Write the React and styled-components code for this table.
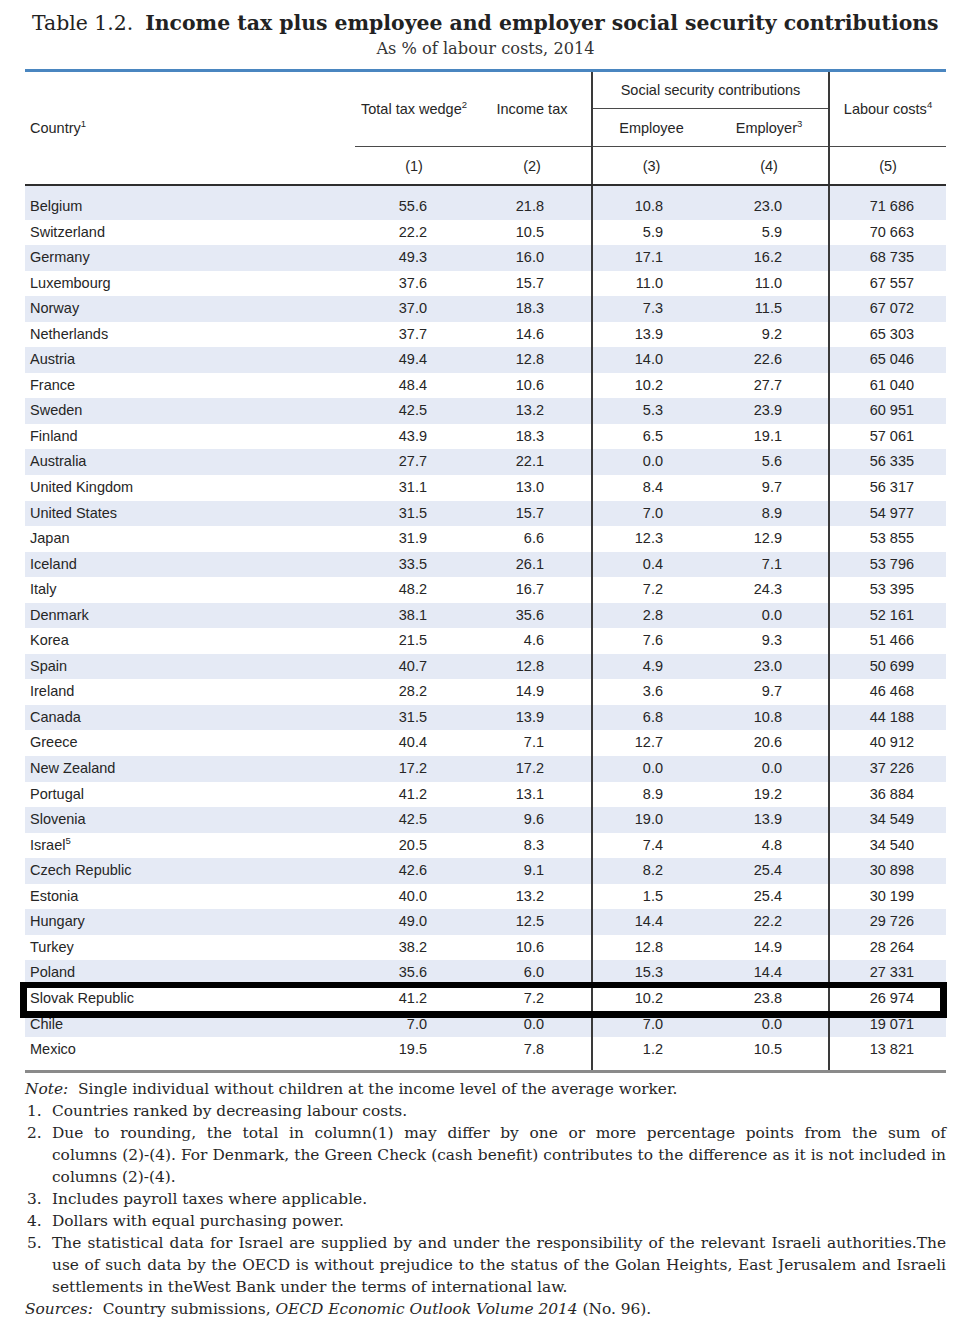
import styled, { createGlobalStyle } from 'styled-components';

const GlobalStyle = createGlobalStyle`
  body {
    margin: 0;
    background: #ffffff;
  }
`;

// OECD data, ranked by labour costs
const rows = [
  ['Belgium', '55.6', '21.8', '10.8', '23.0', '71 686'],
  ['Switzerland', '22.2', '10.5', '5.9', '5.9', '70 663'],
  ['Germany', '49.3', '16.0', '17.1', '16.2', '68 735'],
  ['Luxembourg', '37.6', '15.7', '11.0', '11.0', '67 557'],
  ['Norway', '37.0', '18.3', '7.3', '11.5', '67 072'],
  ['Netherlands', '37.7', '14.6', '13.9', '9.2', '65 303'],
  ['Austria', '49.4', '12.8', '14.0', '22.6', '65 046'],
  ['France', '48.4', '10.6', '10.2', '27.7', '61 040'],
  ['Sweden', '42.5', '13.2', '5.3', '23.9', '60 951'],
  ['Finland', '43.9', '18.3', '6.5', '19.1', '57 061'],
  ['Australia', '27.7', '22.1', '0.0', '5.6', '56 335'],
  ['United Kingdom', '31.1', '13.0', '8.4', '9.7', '56 317'],
  ['United States', '31.5', '15.7', '7.0', '8.9', '54 977'],
  ['Japan', '31.9', '6.6', '12.3', '12.9', '53 855'],
  ['Iceland', '33.5', '26.1', '0.4', '7.1', '53 796'],
  ['Italy', '48.2', '16.7', '7.2', '24.3', '53 395'],
  ['Denmark', '38.1', '35.6', '2.8', '0.0', '52 161'],
  ['Korea', '21.5', '4.6', '7.6', '9.3', '51 466'],
  ['Spain', '40.7', '12.8', '4.9', '23.0', '50 699'],
  ['Ireland', '28.2', '14.9', '3.6', '9.7', '46 468'],
  ['Canada', '31.5', '13.9', '6.8', '10.8', '44 188'],
  ['Greece', '40.4', '7.1', '12.7', '20.6', '40 912'],
  ['New Zealand', '17.2', '17.2', '0.0', '0.0', '37 226'],
  ['Portugal', '41.2', '13.1', '8.9', '19.2', '36 884'],
  ['Slovenia', '42.5', '9.6', '19.0', '13.9', '34 549'],
  ['Israel', '20.5', '8.3', '7.4', '4.8', '34 540', '5'],
  ['Czech Republic', '42.6', '9.1', '8.2', '25.4', '30 898'],
  ['Estonia', '40.0', '13.2', '1.5', '25.4', '30 199'],
  ['Hungary', '49.0', '12.5', '14.4', '22.2', '29 726'],
  ['Turkey', '38.2', '10.6', '12.8', '14.9', '28 264'],
  ['Poland', '35.6', '6.0', '15.3', '14.4', '27 331'],
  ['Slovak Republic', '41.2', '7.2', '10.2', '23.8', '26 974'],
  ['Chile', '7.0', '0.0', '7.0', '0.0', '19 071'],
  ['Mexico', '19.5', '7.8', '1.2', '10.5', '13 821'],
];

const HIGHLIGHT = 'Slovak Republic';

const Page = styled.div`
  width: 921px;
  padding: 8px 24px 12px 25px;
  color: #262626;
`;

const Title = styled.h1`
  margin: 0 0 0 7px;
  font-family: 'DejaVu Serif', 'Liberation Serif', serif;
  font-size: 20.4px;
  line-height: 30px;
  font-weight: 400;
  color: #222;
  white-space: nowrap;

  b {
    font-weight: 700;
    margin-left: 12px;
  }
`;

const Subtitle = styled.div`
  font-family: 'DejaVu Serif', 'Liberation Serif', serif;
  font-size: 16.2px;
  line-height: 22px;
  text-align: center;
  color: #333;
  margin: 0 0 9px 0;
`;

const Table = styled.table`
  width: 921px;
  border-collapse: collapse;
  table-layout: fixed;
  border-top: 3px solid #4a86c0;
  font-family: 'Liberation Sans', Arial, sans-serif;
  font-size: 14.5px;
  color: #262626;

  sup {
    font-size: 9.5px;
    line-height: 0;
    vertical-align: 6px;
  }
`;

const Th = styled.th`
  font-weight: 400;
  padding: 0;
  height: ${p => p.$h || 36}px;
  text-align: ${p => (p.$left ? 'left' : 'center')};
  padding-left: ${p => (p.$left ? '5px' : '0')};
  border-left: ${p => (p.$divider ? '2px solid #3a3a3a' : 'none')};
  border-bottom: ${p => p.$under || 'none'};
  vertical-align: middle;
  white-space: nowrap;
`;

const Row = styled.tr`
  background: ${p => (p.$shaded ? '#e5eaf5' : '#ffffff')};
  position: ${p => (p.$boxed ? 'relative' : 'static')};

  &::after {
    content: ${p => (p.$boxed ? "''" : 'none')};
    position: absolute;
    left: -5px;
    right: -1px;
    top: -4px;
    bottom: -6px;
    border: 7px solid #000;
    border-top-width: 6px;
    pointer-events: none;
  }

  &:first-child td {
    padding-top: 8px;
  }

  &:last-child td {
    padding-bottom: 7px;
    border-bottom: 3px solid #8a8a8a;
  }
`;

const Td = styled.td`
  padding: 0;
  height: 25.55px;
  line-height: 25.55px;
  text-align: ${p => (p.$left ? 'left' : 'right')};
  padding-left: ${p => (p.$left ? '5px' : '0')};
  padding-right: ${p => (p.$pr != null ? p.$pr : 0)}px;
  border-left: ${p => (p.$divider ? '2px solid #3a3a3a' : 'none')};
  white-space: nowrap;
`;

const Notes = styled.div`
  margin-top: 5px;
  font-family: 'DejaVu Serif', 'Liberation Serif', serif;
  font-size: 15.4px;
  line-height: 22px;
  color: #262626;
`;

const NoteLine = styled.div`
  i {
    font-style: italic;
  }
`;

const NoteItem = styled.div`
  display: grid;
  grid-template-columns: 25px 1fr;
  padding-left: 2px;
`;

const NoteText = styled.div`
  text-align: justify;
`;

const Keep = styled.span`
  white-space: nowrap;
`;

const padFor = [46, 47, 47, 46, 32];

const App = () => {
  const line = '1.5px solid #4a4a4a';
  const thick = '2.5px solid #2e2e2e';

  return (
    <Page>
      <GlobalStyle />
      <Title>
        Table 1.2.<b>Income tax plus employee and employer social security contributions</b>
      </Title>
      <Subtitle>As % of labour costs, 2014</Subtitle>

      <Table>
        <colgroup>
          <col style={{ width: 330 }} />
          <col style={{ width: 118 }} />
          <col style={{ width: 119 }} />
          <col style={{ width: 118 }} />
          <col style={{ width: 119 }} />
          <col style={{ width: 117 }} />
        </colgroup>
        <thead>
          <tr>
            <Th rowSpan={3} $left $under={thick}>
              Country<sup>1</sup>
            </Th>
            <Th rowSpan={2} $under={line}>
              Total tax wedge<sup>2</sup>
            </Th>
            <Th rowSpan={2} $under={line}>Income tax</Th>
            <Th colSpan={2} $divider $under={line} $h={36}>
              Social security contributions
            </Th>
            <Th rowSpan={2} $divider $under={line}>
              Labour costs<sup>4</sup>
            </Th>
          </tr>
          <tr>
            <Th $divider $under={line} $h={37}>Employee</Th>
            <Th $under={line} $h={37}>
              Employer<sup>3</sup>
            </Th>
          </tr>
          <tr>
            <Th $under={thick} $h={37}>(1)</Th>
            <Th $under={thick} $h={37}>(2)</Th>
            <Th $divider $under={thick} $h={37}>(3)</Th>
            <Th $under={thick} $h={37}>(4)</Th>
            <Th $divider $under={thick} $h={37}>(5)</Th>
          </tr>
        </thead>
        <tbody>
          {rows.map((r, i) => (
            <Row key={r[0]} $shaded={i % 2 === 0} $boxed={r[0] === HIGHLIGHT}>
              <Td $left>
                {r[0]}
                {r[6] && <sup>{r[6]}</sup>}
              </Td>
              {r.slice(1, 6).map((v, j) => (
                <Td key={j} $pr={padFor[j]} $divider={j === 2 || j === 4}>
                  {v}
                </Td>
              ))}
            </Row>
          ))}
        </tbody>
      </Table>

      <Notes>
        <NoteLine>
          <i>Note:</i>&nbsp; Single individual without children at the income level of the average worker.
        </NoteLine>
        <NoteItem>
          <span>1.</span>
          <NoteText>Countries ranked by decreasing labour costs.</NoteText>
        </NoteItem>
        <NoteItem>
          <span>2.</span>
          <NoteText>
            Due to rounding, the total in column(1) may differ by one or more percentage points from the sum of{' '}
            <Keep>columns (2)-(4).</Keep> For Denmark, the Green Check (cash benefit) contributes to the difference
            as it is not included in <Keep>columns (2)-(4).</Keep>
          </NoteText>
        </NoteItem>
        <NoteItem>
          <span>3.</span>
          <NoteText>Includes payroll taxes where applicable.</NoteText>
        </NoteItem>
        <NoteItem>
          <span>4.</span>
          <NoteText>Dollars with equal purchasing power.</NoteText>
        </NoteItem>
        <NoteItem>
          <span>5.</span>
          <NoteText>
            The statistical data for Israel are supplied by and under the responsibility of the relevant Israeli
            authorities.The use of such data by the OECD is without prejudice to the status of the Golan Heights,
            East Jerusalem and Israeli settlements in theWest Bank under the terms of international law.
          </NoteText>
        </NoteItem>
        <NoteLine>
          <i>Sources:</i>&nbsp; Country submissions, <i>OECD Economic Outlook Volume 2014</i> (No. 96).
        </NoteLine>
      </Notes>
    </Page>
  );
};

export default App;
